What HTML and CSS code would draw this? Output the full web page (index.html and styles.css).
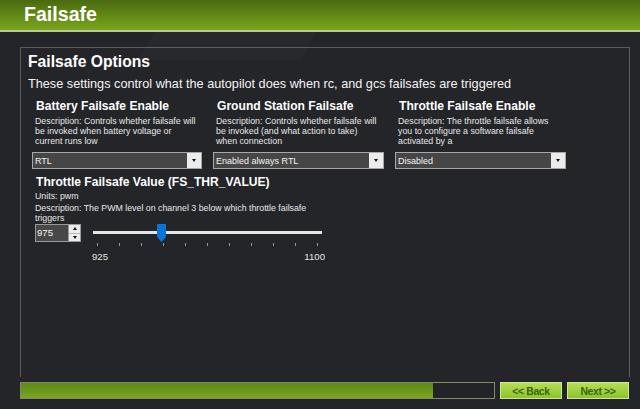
FILE: index.html
```html
<!DOCTYPE html>
<html>
<head>
<meta charset="utf-8">
<link rel="stylesheet" href="styles.css">
</head>
<body>
<div class="page">
  <header class="topbar"><h1 class="title">Failsafe</h1></header>
  <main class="content">
    <section class="panel">
      <h2 class="panel-title">Failsafe Options</h2>
      <p class="lead">These settings control what the autopilot does when rc, and gcs failsafes are triggered</p>
      <div class="cols">
        <div class="col">
          <h3 class="param-name">Battery Failsafe Enable</h3>
          <p class="desc">Description: Controls whether failsafe will be invoked when battery voltage or current runs low</p>
          <div class="combo"><span class="combo-text">RTL</span><span class="combo-btn"><span class="arrow"></span></span></div>
        </div>
        <div class="col">
          <h3 class="param-name">Ground Station Failsafe</h3>
          <p class="desc">Description: Controls whether failsafe will be invoked (and what action to take) when connection</p>
          <div class="combo"><span class="combo-text">Enabled always RTL</span><span class="combo-btn"><span class="arrow"></span></span></div>
        </div>
        <div class="col">
          <h3 class="param-name">Throttle Failsafe Enable</h3>
          <p class="desc">Description: The throttle failsafe allows you to configure a software failsafe activated by a</p>
          <div class="combo"><span class="combo-text">Disabled</span><span class="combo-btn"><span class="arrow"></span></span></div>
        </div>
      </div>
      <div class="value-block">
        <h3 class="param-name">Throttle Failsafe Value (FS_THR_VALUE)</h3>
        <p class="desc">Units: pwm</p>
        <p class="desc wide">Description: The PWM level on channel 3 below which throttle failsafe triggers</p>
        <div class="value-row">
          <div class="spin">
            <span class="spin-text">975</span>
            <span class="spin-btns"><span class="up"></span><span class="down"></span></span>
          </div>
          <div class="slider">
            <div class="track"></div>
            <svg class="thumb" style="left:64px" width="9" height="18" viewBox="0 0 9 18"><path d="M1 0H8a1 1 0 0 1 1 1V13L4.5 18L0 13V1a1 1 0 0 1 1-1Z" fill="#0a74d8"/></svg>
            <div class="ticks"><i></i><i></i><i></i><i></i><i></i><i></i><i></i><i></i><i></i><i></i><i></i></div>
            <div class="labels"><span>925</span><span>1100</span></div>
          </div>
        </div>
      </div>
    </section>
    <footer class="footer">
      <div class="progress"><div class="progress-fill" style="width:412px"></div></div>
      <button class="btn">&lt;&lt; Back</button>
      <button class="btn">Next &gt;&gt;</button>
    </footer>
  </main>
</div>
</body>
</html>
```
FILE: styles.css
```css
* { box-sizing: border-box; }
html, body { margin: 0; padding: 0; }
body {
  width: 640px; height: 409px; overflow: hidden;
  background: #242528;
  font-family: "Liberation Sans", Arial, sans-serif;
  color: #f2f2f2;
}
.page {
  height: 409px;
  background:
    linear-gradient(120deg, transparent 0 150px, rgba(255,255,255,0.018) 150px 290px, transparent 290px) 0 0 / 640px 60px no-repeat,
    #242528;
}
.topbar {
  height: 32px;
  background: linear-gradient(#4a6a10, #79a61c);
  border-bottom: 2px solid #b7c893;
  padding-left: 24px;
}
.title {
  margin: 0;
  font-size: 19.6px;
  font-weight: bold;
  line-height: 29px;
  color: #fff;
}
.content { padding: 15px 0 0 20px; }
.panel {
  width: 610px;
  height: 330px;
  border: 1px solid #5b5c5f;
  border-bottom: none;
  padding: 4px 0 0 7px;
}
.panel-title {
  margin: 0;
  font-size: 15.7px;
  font-weight: bold;
  line-height: 19px;
  color: #fff;
}
.lead {
  margin: 5px 0 0 0;
  font-size: 12.7px;
  line-height: 16px;
  color: #f4f4f4;
}
.cols {
  display: grid;
  grid-template-columns: 170px 171px 171px;
  column-gap: 11px;
  margin-top: 7px;
  padding-left: 4px;
}
.col { display: flex; flex-direction: column; }
.param-name {
  margin: 0;
  padding-left: 4px;
  font-size: 12.1px;
  font-weight: bold;
  line-height: 14px;
  color: #fff;
}
.desc {
  margin: 0;
  padding-left: 3px;
  font-size: 8.8px;
  line-height: 10px;
  color: #e8e8e8;
}
.col .desc { height: 34px; padding-top: 3px; width: 164px; }
.combo {
  margin-top: 5px;
  height: 17px;
  border: 1px solid #a8a8a8;
  background: #464646;
  display: flex;
  align-items: center;
}
.combo-text {
  flex: 1;
  padding-left: 2px;
  font-size: 9px;
  color: #f4f4f4;
}
.combo-btn {
  width: 14px; height: 15px;
  background: #ececec;
  display: flex; align-items: center; justify-content: center;
}
.arrow {
  width: 0; height: 0;
  border-left: 2.5px solid transparent;
  border-right: 2.5px solid transparent;
  border-top: 3px solid #111;
}
.value-block { margin-top: 6px; padding-left: 7px; }
.value-block .param-name { padding-left: 1px; }
.value-block .desc { margin-top: 2px; padding-left: 0; }
.value-block .desc.wide { width: 290px; }
.value-row { display: flex; margin-top: 1px; }
.spin {
  width: 46px; height: 18px;
  border: 1px solid #9a9a9a;
  background: #484848;
  display: flex;
}
.spin-text { flex: 1; font-size: 9.6px; line-height: 16px; padding-left: 1px; color: #f4f4f4; }
.spin-btns {
  width: 12px; height: 16px;
  background: #ececec;
  display: flex; flex-direction: column;
  border-left: 1px solid #9a9a9a;
}
.spin-btns span {
  flex: 1;
  display: flex; align-items: center; justify-content: center;
}
.spin-btns .up { border-bottom: 1px solid #b8b8b8; }
.spin-btns .up::before {
  content: ""; width: 0; height: 0;
  border-left: 2.5px solid transparent; border-right: 2.5px solid transparent;
  border-bottom: 3px solid #111;
}
.spin-btns .down::before {
  content: ""; width: 0; height: 0;
  border-left: 2.5px solid transparent; border-right: 2.5px solid transparent;
  border-top: 3px solid #111;
}
.slider {
  position: relative;
  margin-left: 12px;
  width: 229px;
  padding-top: 7px;
}
.track {
  height: 3px;
  background: #e4e4e4;
}
.thumb { position: absolute; top: 0; }
.ticks {
  display: flex; justify-content: space-between;
  padding: 0 4px;
  margin-top: 9px;
}
.ticks i { width: 1px; height: 3px; background: #9a9a9a; }
.labels {
  display: flex; justify-content: space-between;
  margin-top: 5px;
  font-size: 9.6px;
  color: #e6e6e6;
  margin-left: -1px;
  margin-right: -3px;
}
.footer {
  display: flex;
  margin-top: 5px;
  height: 17px;
}
.progress {
  width: 475px; height: 17px;
  border: 1px solid #7e8d64;
  background: #232427;
}
.progress-fill {
  height: 100%;
  background: linear-gradient(#5d8818, #7aa523);
}
.btn {
  margin-left: 5px;
  width: 62px; height: 17px;
  padding: 0;
  border: 1px solid #cfe79a;
  background: linear-gradient(#b3df55, #8cc42c);
  color: #3a650c;
  font-family: "Liberation Sans Narrow", "Liberation Sans", Arial, sans-serif;
  font-size: 10.5px;
  font-weight: bold;
  letter-spacing: -0.4px;
}
```
